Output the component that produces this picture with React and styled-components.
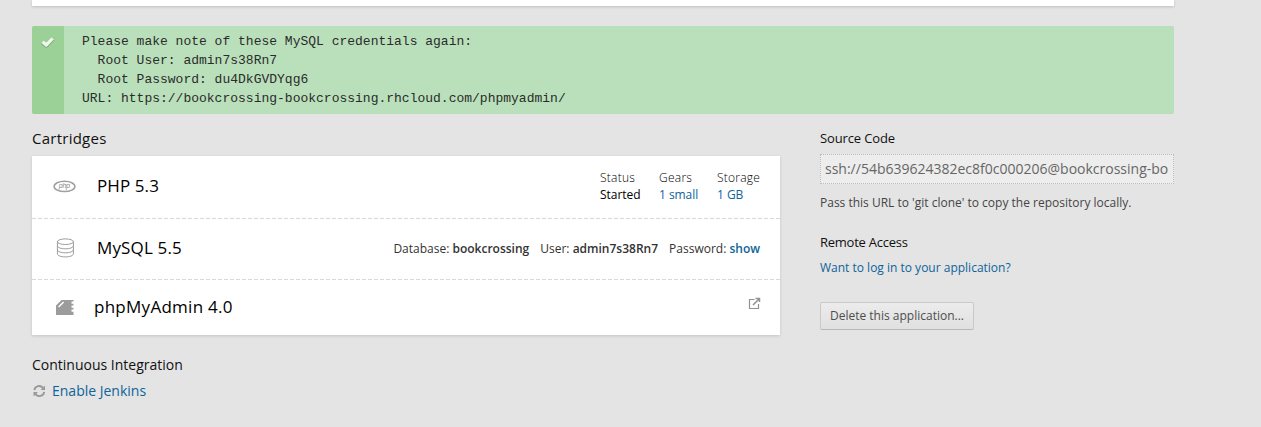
import React from "react";
import styled, { createGlobalStyle } from "styled-components";

const Global = createGlobalStyle`
  *, *::before, *::after { box-sizing: border-box; }
  html, body { margin: 0; background: #e4e4e4; overflow: hidden; }
  body { font-family: "Open Sans", "Liberation Sans", sans-serif; font-size: 14px; color: #000; }
`;

const Page = styled.div`
  width: 1142px;
  height: 427px;
  margin-left: 32px;
`;

const HeaderPanel = styled.div`
  height: 6px;
  background: #fff;
  box-shadow: 0 1px 3px rgba(0, 0, 0, 0.16);
`;

const Alert = styled.div`
  display: flex;
  height: 88px;
  margin-top: 20px;
  border-radius: 2px;
  overflow: hidden;
  background: #b9e0ba;
`;

const AlertMark = styled.div`
  width: 32px;
  padding: 9px 0 0 8px;
  background: #9bd096;
  svg { display: block; }
`;

const AlertText = styled.pre`
  margin: 0;
  padding: 6px 18px;
  font: 13px/19px "Liberation Mono", monospace;
  color: #2b2b2b;
`;

const Columns = styled.div`
  display: flex;
  justify-content: space-between;
`;

const Main = styled.main`
  width: 748px;
`;

const Side = styled.aside`
  display: flex;
  flex-direction: column;
  align-items: flex-start;
  width: 354px;
`;

const Text = styled.div`
  margin-top: ${(p) => p.$top || 0}px;
  font-size: ${(p) => p.$size || 14}px;
  line-height: 20px;
  letter-spacing: ${(p) => p.$track || 0}px;
  color: ${(p) => p.$color || "#111"};
  white-space: nowrap;
`;

const Card = styled.div`
  margin-top: 8px;
  background: #fff;
  box-shadow: 0 1px 3px rgba(0, 0, 0, 0.14);
`;

const Row = styled.div`
  display: flex;
  align-items: flex-start;
  height: ${(p) => p.$height}px;
  padding-right: 20px;
  background: ${(p) =>
    p.$last ? "none" : "repeating-linear-gradient(90deg, #d9d9d9 0 4px, transparent 4px 6px) left bottom / 100% 1px no-repeat"};
`;

const IconCell = styled.div`
  width: ${(p) => p.$width}px;
  padding: ${(p) => p.$top}px 0 0 21px;
  svg { display: block; }
`;

const Name = styled.div`
  flex: 1;
  margin-top: ${(p) => p.$top}px;
  font-size: 17px;
  line-height: 24px;
  letter-spacing: ${(p) => p.$track || 0}px;
`;

const Stats = styled.div`
  display: grid;
  grid-template-columns: 59px 58px 43px;
  margin-top: 13px;
  font-size: 12px;
  line-height: 17px;
  white-space: nowrap;
`;

const Stat = styled.div`
  letter-spacing: -0.05px;
`;

const Label = styled.div`
  font-weight: 300;
  letter-spacing: 0.25px;
`;

const Link = styled.span`
  color: #0e6399;
`;

const Credentials = styled.div`
  display: flex;
  gap: 11px;
  margin-top: 21px;
  font-size: 12px;
  line-height: 18px;
  color: #333;
  b { font-weight: 600; }
  b${Link} { color: #0e6399; }
`;

const LinkIcon = styled.div`
  margin: 17px -1px 0 0;
  svg { display: block; }
`;

const Jenkins = styled.div`
  display: flex;
  align-items: center;
  gap: 6px;
  height: 20px;
  margin-top: 6px;
  padding-left: 1px;
  font-size: 14px;
  line-height: 18px;
  padding-bottom: 1px;
`;

const UrlField = styled.div`
  width: 354px;
  height: 30px;
  margin-top: 6px;
  padding: 0 4px;
  border: 1px dotted #bdbdbd;
  background: #ededed;
  color: #666;
  font-size: 14px;
  line-height: 28px;
  white-space: nowrap;
  overflow: hidden;
`;

const DeleteButton = styled.button`
  width: 154px;
  height: 28px;
  margin: 24px 0 0;
  padding: 0;
  border: 1px solid #c9c9c9;
  border-bottom-color: #b7b7b7;
  border-radius: 2px;
  background: linear-gradient(#ececec, #e0e0e0);
  color: #4d4d4d;
  font: 12px/24px "Open Sans", sans-serif;
`;

const CheckIcon = () => (
  <svg width="16" height="14" viewBox="0 0 16 14">
    <path d="M2.6 6.7 6.3 9.9 12.6 3.4" fill="none" stroke="#7fae7b" strokeWidth="4.6" strokeLinejoin="round" transform="translate(0 .5)" />
    <path d="M2.6 6.7 6.3 9.9 12.6 3.4" fill="none" stroke="#edf7ec" strokeWidth="3.4" strokeLinejoin="round" />
  </svg>
);

const PhpIcon = () => (
  <svg width="24" height="14" viewBox="0 0 24 14">
    <ellipse cx="11.5" cy="7.4" rx="10.4" ry="5.2" fill="none" stroke="#a0a0a0" strokeWidth="1.5" />
    <text x="5.7" y="9" fontFamily="Liberation Sans, sans-serif" fontSize="7.2" fontStyle="italic" fill="#888" textLength="11.4">php</text>
  </svg>
);

const DatabaseIcon = () => (
  <svg width="24" height="20" viewBox="0 0 24 20" fill="none" stroke="#9c9c9c">
    <ellipse cx="12.4" cy="3.7" rx="8" ry="2.8" />
    <path d="M4.4 3.7v12.2c0 1.7 3.6 3 8 3s8-1.3 8-3V3.7M4.4 7.8c0 1.7 3.6 3 8 3s8-1.3 8-3M4.4 11.8c0 1.7 3.6 3 8 3s8-1.3 8-3" />
  </svg>
);

const CartridgeIcon = () => (
  <svg width="24" height="16" viewBox="0 0 24 16">
    <path d="M3 15V5.5L8.5 0H20.5v1.5H18.5v2.2h2v1.8h-2v2.2h2v1.8h-2v2.2h2V15z" fill="#9c9c9c" />
    <path d="m5.6 7 5-5" stroke="#fff" strokeWidth="1.4" />
  </svg>
);

const ExternalIcon = () => (
  <svg width="13" height="13" viewBox="0 0 13 13" fill="none" stroke="#929292">
    <path d="M6.5 2.5h-5v9h9V7" strokeWidth="1.2" />
    <path d="M5 8 11 2M7.5 1.5h4V5" strokeWidth="1.5" />
  </svg>
);

const RefreshIcon = () => (
  <svg width="13" height="12" viewBox="0 0 13 12" fill="none" stroke="#999" strokeWidth="1.9">
    <path d="M1.4 5.1A4.8 4.8 0 0 1 10 3M11.2 6.9A4.8 4.8 0 0 1 2.5 9" />
    <path d="M12 .5V5H7.5zM.5 11.5V7H5z" fill="#999" stroke="none" />
  </svg>
);

export default function App() {
  return (
    <>
      <Global />
      <Page>
        <HeaderPanel />
        <Alert>
          <AlertMark><CheckIcon /></AlertMark>
          <AlertText>{`Please make note of these MySQL credentials again:
  Root User: admin7s38Rn7
  Root Password: du4DkGVDYqg6
URL: https://bookcrossing-bookcrossing.rhcloud.com/phpmyadmin/`}</AlertText>
        </Alert>
        <Columns>
          <Main>
            <Text $top={14} $size={15} $track={0.25}>Cartridges</Text>
            <Card>
              <Row $height={63}>
                <IconCell $width={65} $top={23}><PhpIcon /></IconCell>
                <Name $top={18} $track={0.1}>PHP 5.3</Name>
                <Stats>
                  <Stat><Label>Status</Label>Started</Stat>
                  <Stat><Label>Gears</Label><Link>1 small</Link></Stat>
                  <Stat><Label>Storage</Label><Link>1 GB</Link></Stat>
                </Stats>
              </Row>
              <Row $height={61}>
                <IconCell $width={65} $top={19}><DatabaseIcon /></IconCell>
                <Name $top={17} $track={0.15}>MySQL 5.5</Name>
                <Credentials>
                  <span>Database: <b>bookcrossing</b></span>
                  <span>User: <b>admin7s38Rn7</b></span>
                  <span>Password: <Link as="b">show</Link></span>
                </Credentials>
              </Row>
              <Row $height={55} $last>
                <IconCell $width={62} $top={20}><CartridgeIcon /></IconCell>
                <Name $top={15} $track={0.27}>phpMyAdmin 4.0</Name>
                <LinkIcon><ExternalIcon /></LinkIcon>
              </Row>
            </Card>
            <Text $top={20}>Continuous Integration</Text>
            <Jenkins><RefreshIcon /><Link>Enable Jenkins</Link></Jenkins>
          </Main>
          <Side>
            <Text $top={14} $size={13} $track={-0.13}>Source Code</Text>
            <UrlField>ssh://54b639624382ec8f0c000206@bookcrossing-bo</UrlField>
            <Text $top={9} $size={12} $color="#444">Pass this URL to 'git clone' to copy the repository locally.</Text>
            <Text $top={19} $size={13} $track={-0.25}>Remote Access</Text>
            <Text $top={6} $size={12} $color="#0e6399">Want to log in to your application?</Text>
            <DeleteButton>Delete this application...</DeleteButton>
          </Side>
        </Columns>
      </Page>
    </>
  );
}
